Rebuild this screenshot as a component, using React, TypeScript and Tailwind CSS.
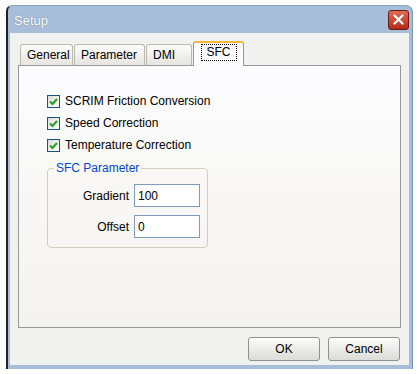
import React from 'react';

const font = { fontFamily: '"Liberation Sans", Arial, sans-serif' };

function CheckRow({ label }: { label: string }) {
  return (
    <div className="flex items-center h-[22px]">
      <div className="w-[13px] h-[13px] border border-[#1c5180] bg-gradient-to-br from-[#dcdcd7] to-white flex items-center justify-center">
        <svg width="9" height="9" viewBox="0 0 9 9">
          <path d="M1 4.5 L3.5 7 L8 2" stroke="#21a121" strokeWidth="2" fill="none" />
        </svg>
      </div>
      <span className="ml-[5px] text-[12px] text-black">{label}</span>
    </div>
  );
}

function Field({ label, value }: { label: string; value: string }) {
  return (
    <div className="flex items-center h-[23px]">
      <span className="w-[86px] text-right pr-[5px] text-[12px] text-black">{label}</span>
      <div className="w-[66px] h-[23px] border border-[#7f9db9] bg-white px-[3px] flex items-center text-[12px] text-black">
        {value}
      </div>
    </div>
  );
}

function Tab({ label, w }: { label: string; w: string }) {
  return (
    <div className={`${w} h-[21px] mt-[3px] pl-[6px] flex items-center border border-b-0 border-[#b9b9b0] rounded-t-[3px] bg-gradient-to-b from-[#fcfcfb] to-[#e6e5df] text-[12px] text-black mr-[1px]`}>
      {label}
    </div>
  );
}

export default function App() {
  return (
    <div className="w-[419px] h-[374px] bg-white pt-[5px] pl-[6px]" style={font}>
      <div className="w-[407px] h-[364px] flex flex-col border-l-2 border-[#222] rounded-tl-[6px] rounded-tr-[7px] bg-[#a7bdd9] border-t border-r border-t-[#8aa3c4] border-r-[#7a95b8]">
        {/* title bar */}
        <div className="h-[27px] flex items-center justify-between pl-[6px] pr-[3px]">
          <span className="text-[13px] text-white pt-[3px]" style={{ textShadow: '0 0 1px #556b8a' }}>Setup</span>
          <div className="w-[21px] h-[20px] rounded-[3px] border border-[#6e1a10] bg-gradient-to-b from-[#e06a55] to-[#b22a18] flex items-center justify-center">
            <svg width="11" height="11" viewBox="0 0 11 11">
              <path d="M1.5 1.5 L9.5 9.5 M9.5 1.5 L1.5 9.5" stroke="white" strokeWidth="2.2" strokeLinecap="round" />
            </svg>
          </div>
        </div>
        {/* client */}
        <div className="flex-1 mb-[4px] ml-[2px] mr-[3px] bg-[#f1f1ef] flex flex-col px-[8px] pt-[8px]">
          <div className="flex items-end h-[24px] pl-[2px] relative z-10">
            <Tab label="General" w="w-[53px]" />
            <Tab label="Parameter" w="w-[71px]" />
            <Tab label="DMI" w="w-[46px]" />
            <div className="w-[51px] h-[25px] border border-b-0 border-[#919b9c] border-t-[#f5b73a] border-t-2 rounded-t-[3px] bg-[#fcfcfe] flex justify-center pt-[1px] -mb-px">
              <span className="border border-dotted border-black px-[5px] h-[17px] leading-[15px] text-[12px] text-black">SFC</span>
            </div>
          </div>
          <div className="h-[263px] border border-[#919b9c] bg-gradient-to-b from-[#fcfcfe] to-[#f4f3ee] pl-[28px] pt-[24px]">
            <CheckRow label="SCRIM Friction Conversion" />
            <CheckRow label="Speed Correction" />
            <CheckRow label="Temperature Correction" />
            <div className="relative mt-[12px] w-[161px] h-[80px] border border-[#d0d0bf] rounded-[4px]">
              <span className="absolute -top-[9px] left-[6px] bg-[#f9f9f8] px-[2px] text-[12px] text-[#0046d5] leading-[16px]">SFC Parameter</span>
              <div className="pt-[15px] flex flex-col gap-[8px]">
                <Field label="Gradient" value="100" />
                <Field label="Offset" value="0" />
              </div>
            </div>
          </div>
          <div className="flex justify-end gap-[8px] mt-[9px] pr-[1px]">
            {['OK', 'Cancel'].map((b) => (
              <div
                key={b}
                className="w-[72px] h-[24px] border border-[#8e8f8f] rounded-[3px] bg-gradient-to-b from-[#fdfdfd] via-[#ebebe9] to-[#dcdcd8] flex items-center justify-center text-[12px] text-black"
              >
                {b}
              </div>
            ))}
          </div>
        </div>
      </div>
    </div>
  );
}
